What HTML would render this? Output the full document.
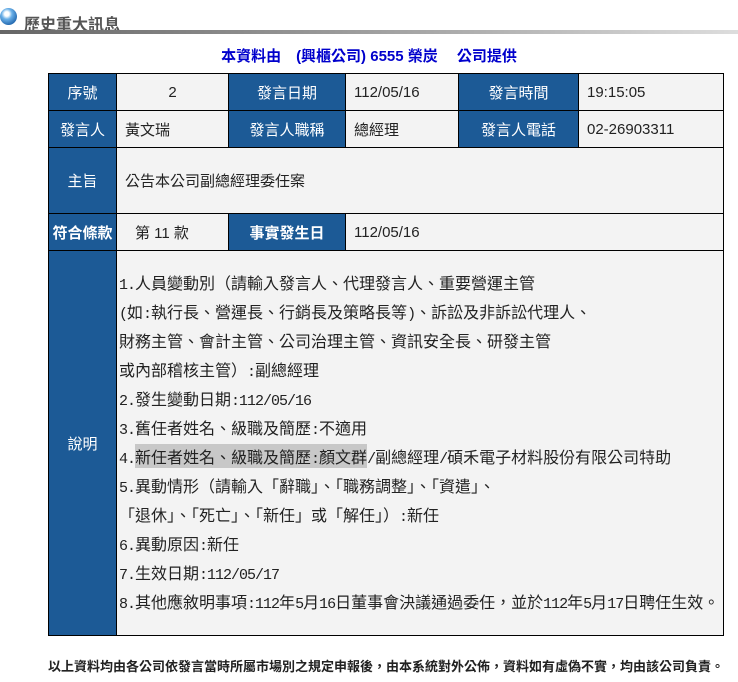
<!DOCTYPE html>
<html><head><meta charset="utf-8"><style>
body{margin:0;background:#fff;width:738px;height:682px;overflow:hidden;font-family:"Liberation Sans","Noto Sans CJK TC",sans-serif;position:relative}
.globe{position:absolute;left:0;top:8px;width:17px;height:17px;border-radius:50%;background:radial-gradient(circle at 40% 35%,#fff 0 15%,#6ab0e8 35%,#1a5fa8 80%)}
.title{position:absolute;left:24px;top:11px;font-size:16px;font-weight:bold;color:#555}
.bar{position:absolute;left:0;top:30px;width:738px;height:4px;background:linear-gradient(to right,#666,#aaa 60%,#ddd)}
.sub{position:absolute;left:0;width:738px;top:45px;text-align:center;color:#0000cc;font-weight:bold;font-size:15px}
table{position:absolute;left:48px;top:73px;border-collapse:collapse;table-layout:fixed;width:675px}
td{border:1px solid #000;font-size:15px;padding:0;background:#f3f3f3;color:#222}
td.h{background:#1c5a96;color:#fff;text-align:center;font-weight:normal}
td.v{padding-left:8px}
.ex{padding:17px 0 0 2px;vertical-align:top;font-family:"Noto Sans CJK TC",sans-serif;font-size:16px;line-height:29px;color:#222;font-feature-settings:"fwid"}
.ex div{white-space:nowrap;height:29px}
.ex b{font-weight:normal;font-family:"Liberation Mono",monospace;font-size:15px;letter-spacing:-1px}
.hl{background:#c8c8c8}
.foot{position:absolute;left:48px;width:680px;top:656px;text-align:left;font-size:13px;font-weight:bold;color:#222;white-space:nowrap}
</style></head><body>
<div class="globe"></div><div class="title">歷史重大訊息</div><div class="bar"></div>
<div class="sub">本資料由　(興櫃公司) 6555 榮炭　 公司提供</div>
<table>
<colgroup><col style="width:68px"><col style="width:112px"><col style="width:117px"><col style="width:113px"><col style="width:120px"><col style="width:145px"></colgroup>
<tr style="height:37px"><td class="h">序號</td><td style="text-align:center">2</td><td class="h">發言日期</td><td class="v">112/05/16</td><td class="h">發言時間</td><td class="v">19:15:05</td></tr>
<tr style="height:37px"><td class="h">發言人</td><td class="v">黃文瑞</td><td class="h">發言人職稱</td><td class="v">總經理</td><td class="h">發言人電話</td><td class="v">02-26903311</td></tr>
<tr style="height:66px"><td class="h">主旨</td><td colspan="5" class="v">公告本公司副總經理委任案</td></tr>
<tr style="height:37px"><td class="h" style="font-weight:bold">符合條款</td><td style="padding-left:18px">第 11 款</td><td class="h" style="font-weight:bold">事實發生日</td><td colspan="3" class="v">112/05/16</td></tr>
<tr style="height:385px"><td class="h">說明</td><td colspan="5" class="ex">
<div><b>1.</b>人員變動別（請輸入發言人、代理發言人、重要營運主管</div>
<div><b>(</b>如<b>:</b>執行長、營運長、行銷長及策略長等<b>)</b>、訴訟及非訴訟代理人、</div>
<div>財務主管、會計主管、公司治理主管、資訊安全長、研發主管</div>
<div>或內部稽核主管）<b>:</b>副總經理</div>
<div><b>2.</b>發生變動日期<b>:112/05/16</b></div>
<div><b>3.</b>舊任者姓名、級職及簡歷<b>:</b>不適用</div>
<div><b>4.</b><span class="hl">新任者姓名、級職及簡歷<b>:</b>顏文群</span><b>/</b>副總經理<b>/</b>碩禾電子材料股份有限公司特助</div>
<div><b>5.</b>異動情形（請輸入「辭職」、「職務調整」、「資遣」、</div>
<div>「退休」、「死亡」、「新任」或「解任」）<b>:</b>新任</div>
<div><b>6.</b>異動原因<b>:</b>新任</div>
<div><b>7.</b>生效日期<b>:112/05/17</b></div>
<div><b>8.</b>其他應敘明事項<b>:112</b>年<b>5</b>月<b>16</b>日董事會決議通過委任，並於<b>112</b>年<b>5</b>月<b>17</b>日聘任生效。</div>
</td></tr>
</table>
<div class="foot">以上資料均由各公司依發言當時所屬市場別之規定申報後，由本系統對外公佈，資料如有虛偽不實，均由該公司負責。</div>
</body></html>
